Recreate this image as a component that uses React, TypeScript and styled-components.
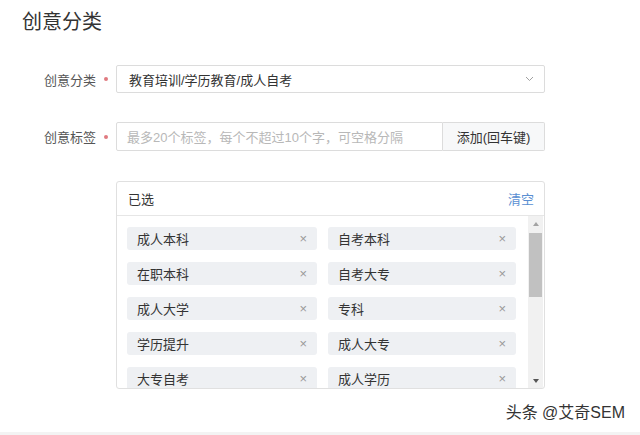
import React from "react";
import styled, { createGlobalStyle } from "styled-components";

const GlobalStyle = createGlobalStyle`
  html, body {
    margin: 0;
    padding: 0;
    background: #fff;
  }
  body {
    font-family: "Liberation Sans", "Noto Sans CJK SC", sans-serif;
    color: #333;
  }
`;

const Page = styled.div`
  width: 640px;
  height: 435px;
  display: flex;
  flex-direction: column;
  overflow: hidden;
`;

const Title = styled.h1`
  margin: 0;
  padding: 10px 0 0 22px;
  font-size: 20px;
  line-height: 24px;
  font-weight: normal;
  color: #333;
`;

const Row = styled.div<{ $top: number }>`
  display: flex;
  align-items: center;
  margin-top: ${(p) => p.$top}px;
`;

const Label = styled.div`
  width: 96px;
  text-align: right;
  font-size: 13px;
  color: #555;
`;

const Required = styled.span`
  width: 20px;
  display: flex;
  justify-content: center;
  &::before {
    content: "";
    width: 4px;
    height: 4px;
    border-radius: 50%;
    background: #e07a80;
  }
`;

const Spacer = styled.span`
  width: 20px;
`;

const Select = styled.div`
  width: 429px;
  height: 28px;
  box-sizing: border-box;
  border: 1px solid #dcdcdc;
  border-radius: 2px;
  display: flex;
  align-items: center;
  justify-content: space-between;
  padding: 0 10px 0 12px;
  font-size: 13px;
  color: #333;
`;

const InputGroup = styled.div`
  width: 429px;
  height: 29px;
  display: flex;
`;

const Input = styled.div`
  flex: 1;
  box-sizing: border-box;
  border: 1px solid #dcdcdc;
  border-radius: 2px 0 0 2px;
  display: flex;
  align-items: center;
  padding-left: 10px;
  font-size: 13px;
  color: #b8b8b8;
`;

const AddButton = styled.div`
  width: 102px;
  box-sizing: border-box;
  border: 1px solid #dcdcdc;
  border-left: none;
  border-radius: 0 2px 2px 0;
  background: #f7f8f9;
  display: flex;
  align-items: center;
  justify-content: center;
  font-size: 13px;
  color: #333;
`;

const Panel = styled.div`
  width: 429px;
  height: 208px;
  box-sizing: border-box;
  border: 1px solid #e0e0e0;
  border-radius: 3px;
  display: flex;
  flex-direction: column;
`;

const PanelHeader = styled.div`
  height: 33px;
  flex-shrink: 0;
  border-bottom: 1px solid #e6e6e6;
  display: flex;
  align-items: center;
  justify-content: space-between;
  padding: 0 10px 0 11px;
  font-size: 13px;
  color: #333;
`;

const ClearLink = styled.span`
  color: #5a8fd2;
`;

const PanelBody = styled.div`
  flex: 1;
  display: flex;
  min-height: 0;
`;

const TagGrid = styled.div`
  flex: 1;
  overflow: hidden;
  display: grid;
  grid-template-columns: 190px 188px;
  grid-auto-rows: 23px;
  column-gap: 11px;
  row-gap: 12px;
  padding: 11px 0 0 10px;
  align-content: start;
`;

const Tag = styled.div`
  background: #eef0f3;
  border-radius: 3px;
  display: flex;
  align-items: center;
  justify-content: space-between;
  padding: 0 10px;
  font-size: 13px;
  color: #333;
`;

const Close = styled.span`
  font-size: 13px;
  color: #999;
`;

const ScrollTrack = styled.div`
  width: 15px;
  margin-right: 1px;
  background: #f1f1f1;
  display: flex;
  flex-direction: column;
  align-items: center;
`;

const Arrow = styled.div<{ $down?: boolean }>`
  height: 15px;
  flex-shrink: 0;
  display: flex;
  align-items: center;
  justify-content: center;
  &::before {
    content: "";
    border-left: 3.5px solid transparent;
    border-right: 3.5px solid transparent;
    ${(p) =>
      p.$down ? "border-top: 4px solid #555;" : "border-bottom: 4px solid #a3a3a3;"}
  }
`;

const Thumb = styled.div`
  width: 13px;
  height: 64px;
  background: #c1c1c1;
  margin-top: 2px;
`;

const TrackFill = styled.div`
  flex: 1;
`;

const Footer = styled.div`
  height: 43px;
  display: flex;
  align-items: center;
  justify-content: flex-end;
  padding-right: 15px;
  font-size: 16px;
  color: #333;
`;

const Band = styled.div`
  flex: 1;
  background: #f3f3f3;
`;

const Chevron = () => (
  <svg width="9" height="6" viewBox="0 0 9 6">
    <path d="M1 1l3.5 3.5L8 1" fill="none" stroke="#a0a0a0" strokeWidth="1" />
  </svg>
);

const tags = [
  "成人本科",
  "自考本科",
  "在职本科",
  "自考大专",
  "成人大学",
  "专科",
  "学历提升",
  "成人大专",
  "大专自考",
  "成人学历",
];

export default function App() {
  return (
    <Page>
      <GlobalStyle />
      <Title>创意分类</Title>
      <Row $top={31}>
        <Label>创意分类</Label>
        <Required />
        <Select>
          <span>教育培训/学历教育/成人自考</span>
          <Chevron />
        </Select>
      </Row>
      <Row $top={29}>
        <Label>创意标签</Label>
        <Required />
        <InputGroup>
          <Input>最多20个标签，每个不超过10个字，可空格分隔</Input>
          <AddButton>添加(回车键)</AddButton>
        </InputGroup>
      </Row>
      <Row $top={30}>
        <Label />
        <Spacer />
        <Panel>
          <PanelHeader>
            <span>已选</span>
            <ClearLink>清空</ClearLink>
          </PanelHeader>
          <PanelBody>
            <TagGrid>
              {tags.map((t) => (
                <Tag key={t}>
                  <span>{t}</span>
                  <Close>×</Close>
                </Tag>
              ))}
            </TagGrid>
            <ScrollTrack>
              <Arrow />
              <Thumb />
              <TrackFill />
              <Arrow $down />
            </ScrollTrack>
          </PanelBody>
        </Panel>
      </Row>
      <Footer>头条 @艾奇SEM</Footer>
      <Band />
    </Page>
  );
}
